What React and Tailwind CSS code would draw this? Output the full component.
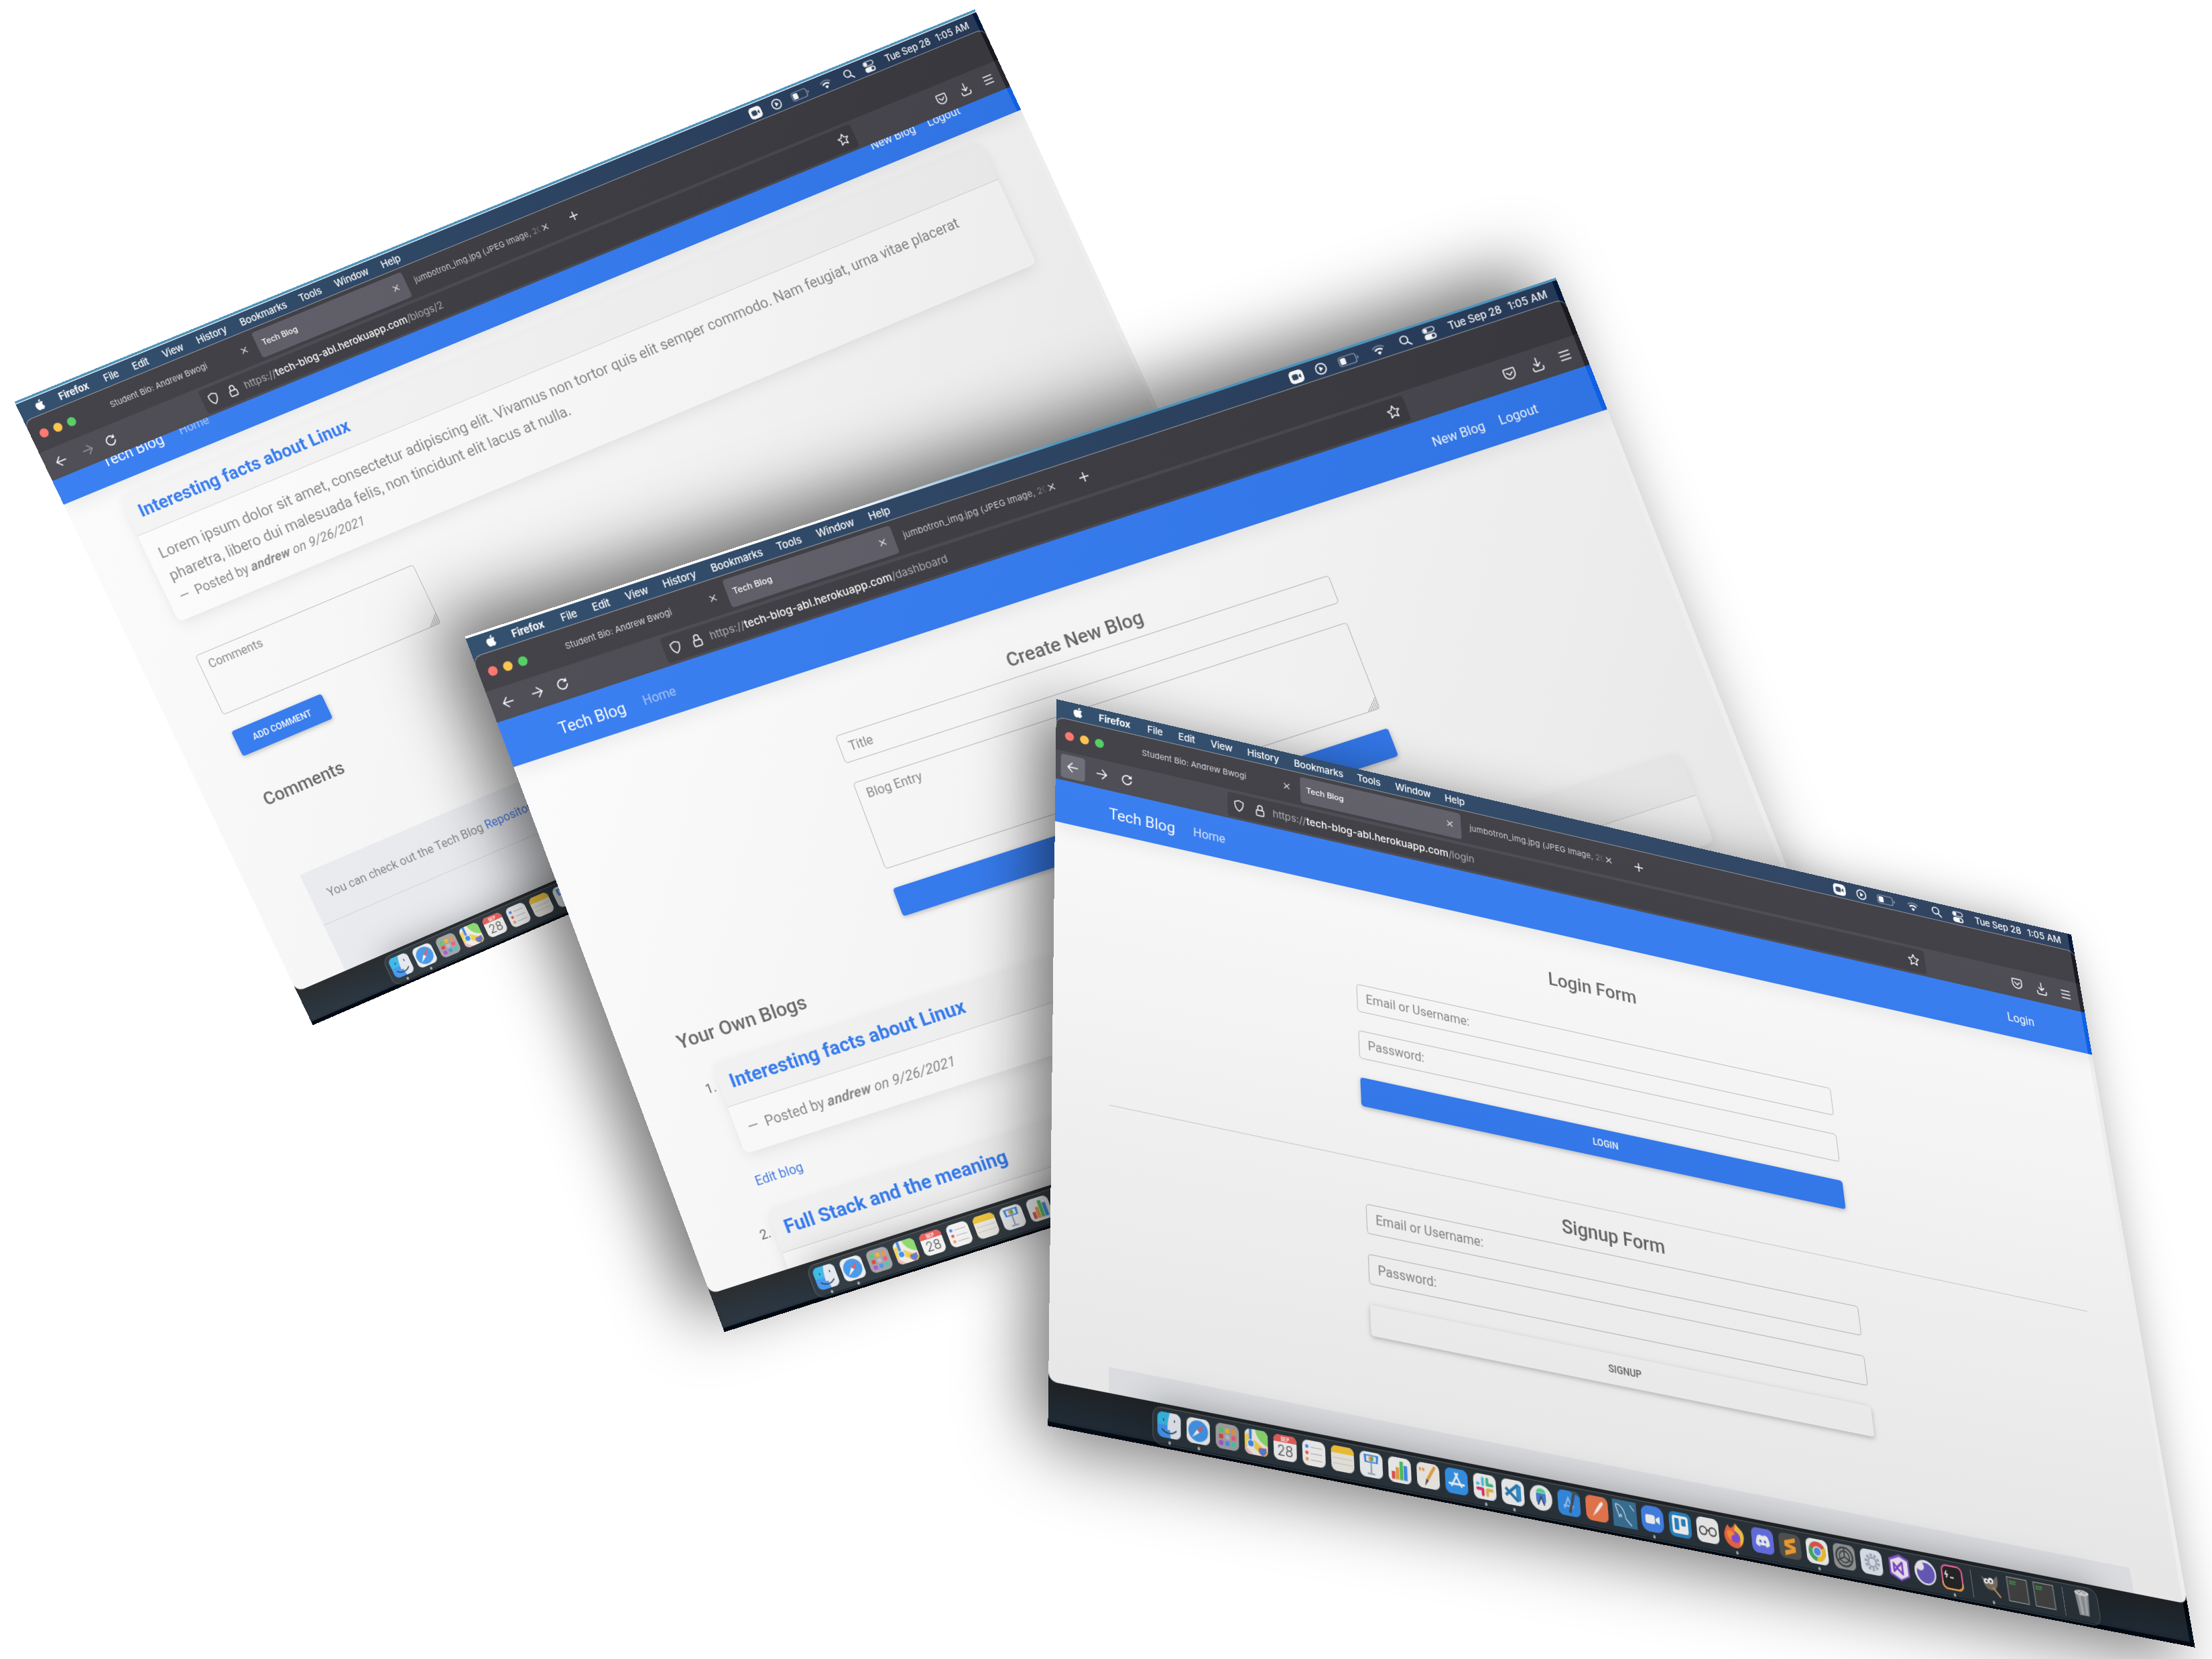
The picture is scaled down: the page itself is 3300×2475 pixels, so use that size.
import React from "react";
import { FaApple, FaDiscord } from "react-icons/fa";

const W = 1440;
const H = 900;

/* Projects the flat 1440x900 desktop onto four corners: TL, TR, BR, BL. */
function project(corners, dx = 0, dy = 0) {
  const [p0, p1, p2, p3] = corners.map(([x, y]) => [x + dx, y + dy]);
  const s = [p0[0] - p1[0] + p2[0] - p3[0], p0[1] - p1[1] + p2[1] - p3[1]];
  const d1 = [p1[0] - p2[0], p1[1] - p2[1]];
  const d2 = [p3[0] - p2[0], p3[1] - p2[1]];
  const det = d1[0] * d2[1] - d1[1] * d2[0];
  const g = (s[0] * d2[1] - s[1] * d2[0]) / det;
  const h = (d1[0] * s[1] - d1[1] * s[0]) / det;
  const a = p1[0] * (1 + g) - p0[0];
  const d = p1[1] * (1 + g) - p0[1];
  const b = p3[0] * (1 + h) - p0[0];
  const e = p3[1] * (1 + h) - p0[1];
  const m = [a / W, d / W, 0, g / W, b / H, e / H, 0, h / H, 0, 0, 1, 0, p0[0], p0[1], 0, 1];
  return { transform: `matrix3d(${m.map((n) => n.toFixed(10)).join(",")})` };
}

const BLOG = [[23.5, 603.5], [1456, 18], [1871, 921], [466.7, 1529.3]];
const DASH = [[694.8, 953], [2322.3, 417.8], [2731, 1459.9], [1080.7, 1987.3]];
const LOGIN = [[1576, 1043], [3089.8, 1394], [3274.6, 2457.7], [1563.5, 2127.3]];

/* ---------- menu bar ---------- */

const MENUS = [
  ["File", "w-[42px]"],
  ["Edit", "w-[44px]"],
  ["View", "w-[50px]"],
  ["History", "w-[64px]"],
  ["Bookmarks", "w-[87px]"],
  ["Tools", "w-[53px]"],
  ["Window", "w-[69px]"],
  ["Help", "w-[40px]"],
];

function MenuBar() {
  return (
    <div className="flex h-[25px] shrink-0 items-center text-[13px] font-medium text-white">
      <div className="flex w-[57px] justify-center pb-px">
        <FaApple size={16} />
      </div>
      <div className="w-[65.5px] font-bold tracking-[-0.2px]">Firefox</div>
      {MENUS.map(([m, w]) => (
        <div key={m} className={w + " tracking-[-0.2px] whitespace-nowrap"}>{m}</div>
      ))}
      <div className="flex-1" />
      <div className="flex items-center">
        <div className="flex w-8 justify-center">
          <svg width="18" height="16" viewBox="0 0 18 16"><rect width="18" height="16" rx="5" fill="#fff" /><rect x="3.5" y="4.5" width="7.5" height="7" rx="1.8" fill="#10294b" /><path d="M12 7.2l2.8-2v5.6L12 8.8z" fill="#10294b" /></svg>
        </div>
        <div className="flex w-8 justify-center">
          <svg width="16" height="16" viewBox="0 0 16 16"><circle cx="8" cy="8" r="6.5" fill="none" stroke="#fff" strokeWidth="1.5" /><path d="M6.2 4.8L11 8l-4.8 3.2z" fill="#fff" /></svg>
        </div>
        <div className="flex w-10 justify-center">
          <svg width="27" height="14" viewBox="0 0 27 14"><rect x=".75" y="1.25" width="22" height="11.5" rx="3" fill="none" stroke="#fff" strokeOpacity=".5" strokeWidth="1.2" /><rect x="2.5" y="3" width="7" height="8" rx="1.5" fill="#fff" /><path d="M24.5 5v4c1-.3 1.6-1 1.6-2s-.6-1.700-1.600-2z" fill="#fff" fillOpacity=".5" /></svg>
        </div>
        <div className="flex w-[38px] justify-center">
          <svg width="17" height="14" viewBox="0 0 17 14" fill="none" strokeLinecap="butt"><path d="M1 5.200a10.800 10.800 0 0 1 15 0" stroke="#fff" strokeOpacity=".35" strokeWidth="1.800" /><path d="M3.600 7.800a7 7 0 0 1 9.800 0" stroke="#fff" strokeWidth="2" /><path d="M8.500 13.500L5.900 10.500a3.600 3.600 0 0 1 5.200 0z" fill="#fff" /></svg>
        </div>
        <div className="flex w-8 justify-center">
          <svg width="15" height="15" viewBox="0 0 15 15" fill="none" stroke="#fff" strokeWidth="1.7" strokeLinecap="round"><circle cx="6.200" cy="6.200" r="4.700" /><path d="M9.800 9.800l4 4" /></svg>
        </div>
        <div className="mr-[9px] flex w-8 justify-center">
          <svg width="16" height="16" viewBox="0 0 16 16"><rect x=".8" y="1" width="14.400" height="6" rx="3" fill="none" stroke="#fff" strokeWidth="1.200" /><circle cx="4" cy="4" r="2.400" fill="#fff" /><rect x=".5" y="8.700" width="15" height="7" rx="3.500" fill="#fff" /><circle cx="11.800" cy="12.200" r="2.100" fill="#10294b" /></svg>
        </div>
        <div className="w-[78px] tracking-[-0.15px] whitespace-nowrap">Tue Sep 28</div>
        <div className="w-[68px] tracking-[0px] whitespace-nowrap">1:05 AM</div>
      </div>
    </div>
  );
}

/* ---------- browser chrome ---------- */

function Cross() {
  return (
    <svg width="9" height="9" viewBox="0 0 9 9" stroke="#e4e4ea" strokeWidth="1.200" className="shrink-0"><path d="M.8.8l7.400 7.400M8.200.8L.8 8.200" /></svg>
  );
}

function TabStrip() {
  return (
    <div className="flex h-[45px] items-center bg-[#1c1b22] text-[11px] text-[#d2d2da]">
      <div className="flex w-[107px] items-center gap-2 pl-[12px]">
        <span className="h-3 w-3 rounded-full bg-[#ff5d55]" />
        <span className="h-3 w-3 rounded-full bg-[#fcba2c]" />
        <span className="h-3 w-3 rounded-full bg-[#33c748]" />
      </div>
      <div className="flex h-9 w-[223px] items-center justify-between pr-[14px] pl-2">
        <span className="whitespace-nowrap">Student Bio: Andrew Bwogi</span>
        <Cross />
      </div>
      <div className="flex h-9 w-[222px] items-center justify-between rounded bg-[#42414d] pr-[11px] pl-2 font-medium text-white">
        <span className="tracking-[-0.05px] whitespace-nowrap">Tech Blog</span>
        <Cross />
      </div>
      <div className="flex h-9 w-[222px] items-center justify-between pr-[10px] pl-3">
        <span className="w-[188px] bg-[linear-gradient(90deg,#d2d2da_90%,#3a3940_100%)] bg-clip-text tracking-[0.12px] whitespace-nowrap text-transparent">jumbotron_img.jpg (JPEG Image, 20</span>
        <Cross />
      </div>
      <div className="flex w-14 justify-center">
        <svg width="14" height="14" viewBox="0 0 14 14" stroke="#fff" strokeWidth="1.400"><path d="M7 1v12M1 7h12" /></svg>
      </div>
    </div>
  );
}

function Arrow({ flip, dim }) {
  return (
    <svg width="15" height="14" viewBox="0 0 15 14" fill="none" stroke="#fbfbfe" strokeOpacity={dim ? 0.4 : 1} strokeWidth="1.500" strokeLinecap="round" strokeLinejoin="round" className={flip ? "rotate-180" : ""}><path d="M14 7H1.500M7 1L1.300 7 7 13" /></svg>
  );
}

function Toolbar({ path, hover, dimForward }) {
  return (
    <div className="flex h-10 items-center bg-[#2b2a33] text-[#fbfbfe]">
      <div className="flex w-[45px] justify-center">
        <div className={hover ? "flex h-8 w-8 items-center justify-center rounded bg-[#52525e]" : "flex h-8 w-8 items-center justify-center"}>
          <Arrow />
        </div>
      </div>
      <div className="flex w-[32px] justify-center"><Arrow flip dim={dimForward} /></div>
      <div className="mr-[118px] flex w-[35px] justify-center">
        <svg width="16" height="16" viewBox="0 0 16 16" fill="none" stroke="#fbfbfe" strokeWidth="1.600" strokeLinecap="round"><path d="M13.800 9.200A6 6 0 1 1 11.500 3.300" /><path d="M14.200 1v5H9.400z" fill="#fbfbfe" stroke="none" /></svg>
      </div>
      <div className="flex h-[33px] w-[979px] items-center rounded bg-[#1c1b22] pl-[8px]">
        <svg width="15" height="17" viewBox="0 0 15 17" fill="none" stroke="#fbfbfe" strokeWidth="1.400" strokeLinejoin="round"><path d="M7.500 1.200l5.700 2.100c.3 5-1.300 9.700-5.700 12.300C3.100 13 1.500 8.300 1.800 3.300z" /></svg>
        <svg width="14" height="17" viewBox="0 0 14 17" fill="none" stroke="#fbfbfe" strokeWidth="1.400" className="ml-[14px]"><rect x="2" y="8" width="10" height="7.500" rx="1.500" /><path d="M4 8V4.500a3 3 0 0 1 6 0V8" /></svg>
        <div className="ml-[10px] flex-1 text-[13.7px] tracking-[-0.05px] whitespace-nowrap text-[#9f9fa8]">
          https://<span className="font-medium text-white">tech-blog-abl.herokuapp.com</span>{path}
        </div>
        <svg width="18" height="18" viewBox="0 0 18 18" fill="none" stroke="#fbfbfe" strokeWidth="1.400" strokeLinejoin="round" className="mr-[8px]"><path d="M9 1.800l2.200 4.800 5 .6-3.700 3.500 1 5.200L9 13.300l-4.500 2.600 1-5.200L1.800 7.200l5-.6z" /></svg>
      </div>
      <div className="flex flex-1 items-center justify-end pr-[17px]">
        <svg width="17" height="17" viewBox="0 0 17 17" fill="none" stroke="#fbfbfe" strokeWidth="1.500" strokeLinecap="round" strokeLinejoin="round"><path d="M3 2h11a1.300 1.300 0 0 1 1.300 1.300V8a6.800 6.800 0 0 1-13.600 0V3.300A1.300 1.300 0 0 1 3 2zM5 6.700l3.500 3.300L12 6.700" /></svg>
        <svg width="17" height="18" viewBox="0 0 17 18" fill="none" stroke="#fbfbfe" strokeWidth="1.500" strokeLinecap="round" strokeLinejoin="round" className="ml-[19px]"><path d="M8.500 1v10M4.700 7.500l3.800 3.800 3.800-3.800M2 12.500v2A2.300 2.300 0 0 0 4.300 16.800h8.400a2.300 2.300 0 0 0 2.300-2.300v-2" /></svg>
        <svg width="15" height="14" viewBox="0 0 15 14" stroke="#fbfbfe" strokeWidth="1.500" strokeLinecap="round" className="ml-[20px]"><path d="M1.500 2h12M1.500 7h12M1.500 12h12" /></svg>
      </div>
    </div>
  );
}

/* ---------- dock ---------- */

const tile = (fill, children) => (
  <>
    <rect x="1" y="1" width="28" height="28" rx="6.500" fill={fill} />
    {children}
  </>
);

const ICONS = [
  { dot: true, art: (<><rect x="1" y="1" width="28" height="28" rx="6.500" fill="#2a8df5" /><path d="M1 7.500A6.500 6.500 0 0 1 7.500 1H16c-2 5-2.500 9-2.700 14H1z" fill="#1fb3ea" /><path d="M16 1h6.500A6.500 6.500 0 0 1 29 7.500v15a6.500 6.500 0 0 1-6.500 6.500H17c-.6-3-1-6-1-9h-3c0-7 1-13 3-19z" fill="#e9edf4" /><path d="M8.500 8.500v2M21.500 8.500v2M6.500 20c5 5 12 5 17 0" stroke="#123" strokeWidth="1.200" fill="none" strokeLinecap="round" /></>) },
  { dot: true, art: tile("#f4f4f4", <><circle cx="15" cy="15" r="11.800" fill="#2c8df0" /><path d="M22.500 7.500l-6 9-3-3z" fill="#f3443d" /><path d="M7.500 22.500l6-9 3 3z" fill="#fff" /></>) },
  { art: tile("#9b9ba0", <><rect x="5" y="6" width="5" height="5" rx="1" fill="#34d058" /><rect x="12.500" y="6" width="5" height="5" rx="1" fill="#f7b500" /><rect x="20" y="6" width="5" height="5" rx="1" fill="#f58a1f" /><rect x="5" y="13" width="5" height="5" rx="1" fill="#e02f2f" /><rect x="12.500" y="13" width="5" height="5" rx="1" fill="#b9b9be" /><rect x="20" y="13" width="5" height="5" rx="1" fill="#fb4666" /><rect x="5" y="20" width="5" height="5" rx="1" fill="#a340d8" /><rect x="12.500" y="20" width="5" height="5" rx="1" fill="#2d8cf0" /><rect x="20" y="20" width="5" height="5" rx="1" fill="#2ec9a4" /></>) },
  { art: tile("#f6f2e9", <><path d="M14 1h8.500A6.500 6.500 0 0 1 29 7.500V18C22 16 15 10 14 1z" fill="#7fdc5c" /><path d="M12 12l17 12c-.6 3-3 5-6.500 5L11 20z" fill="#f8d03a" /><path d="M1 8l5-2v14l-5 2z" fill="#f8d648" /><path d="M1 20l10 9H7.500C4 29 1 26 1 22.500z" fill="#f6b8bd" /><path d="M8 1v16" stroke="#1674e6" strokeWidth="3" /><circle cx="8.500" cy="17" r="4" fill="#2583f2" stroke="#fff" strokeWidth="1.200" /><path d="M18 21l9-1v4c0 2-3 4-4.500 4.500C21 28 18 26 18 24z" fill="#3d74d6" stroke="#e04848" strokeWidth=".8" /></>) },
  { art: tile("#fafafa", <><path d="M1 9V7.500A6.500 6.500 0 0 1 7.500 1h15A6.500 6.500 0 0 1 29 7.500V9z" fill="#ee4a46" /><text x="15" y="7.800" fontSize="5.500" fontWeight="700" textAnchor="middle" fill="#fff">SEP</text><text x="15" y="24" fontSize="16" fontWeight="300" textAnchor="middle" fill="#333">28</text></>) },
  { art: tile("#fafafa", <><circle cx="6.500" cy="8" r="2" fill="#2f7df6" /><circle cx="6.500" cy="15" r="2" fill="#f0443c" /><circle cx="6.500" cy="22" r="2" fill="#f29a38" /><path d="M11 8.500h14M11 15.500h14M11 22.500h14" stroke="#bdbdbd" strokeWidth="1" /></>) },
  { art: tile("#f3f0e8", <><path d="M1 9V7.500A6.500 6.500 0 0 1 7.500 1h15A6.500 6.500 0 0 1 29 7.500V9z" fill="#fbc41d" /><path d="M3 14.500h24M3 20.500h24" stroke="#d0ccc2" strokeWidth=".9" /></>) },
  { art: tile("#f6f9fc", <><path d="M6 4h18l-1 9H7z" fill="#2a7fe6" /><path d="M9 5.500h12v6H9z" fill="#e8f2ff" /><circle cx="15" cy="8.300" r="2.800" fill="#f08c2e" /><path d="M15 5.500a2.800 2.800 0 0 1 0 5.600z" fill="#3bb54a" /><path d="M15 13v11M10.500 25h9" stroke="#7d94ad" strokeWidth="1.600" /></>) },
  { art: tile("#fafafa", <><rect x="5" y="17" width="4.300" height="8.500" fill="#e7443f" /><rect x="10" y="12" width="4.300" height="13.500" fill="#f39a2c" /><rect x="15" y="5" width="4.300" height="20.500" fill="#3ac152" /><rect x="20" y="9" width="4.300" height="16.500" fill="#2c83f2" /></>) },
  { art: tile("#f8f5f0", <><path d="M22 3l3 1.500L15.500 20l-3-1.500z" fill="#f39a2c" /><path d="M12.500 18.500l3 1.500-5 7z" fill="#3c3c3c" /><path d="M4 7h2.500v3.500H4zM8 7h2.500v3.500H8z" fill="#f2962b" /></>) },
  { art: tile("#1d8bf0", <><path d="M16.500 6.500L9 20M13.500 6.500L21 20M6 18h18" stroke="#fff" strokeWidth="2.300" strokeLinecap="round" /></>) },
  { dot: true, art: tile("#fafafa", <g fill="none" strokeWidth="3.400" strokeLinecap="round"><path d="M12.500 6v7" stroke="#36c5f0" /><path d="M6 12.300h1" stroke="#36c5f0" /><path d="M18 6v6" stroke="#2eb67d" /><path d="M18 12.300h6" stroke="#2eb67d" /><path d="M6 17.700h5" stroke="#e01e5a" /><path d="M12.500 18v6" stroke="#e01e5a" /><path d="M18 18h6M18 18v6" stroke="#ecb22e" /></g>) },
  { dot: true, art: tile("#fafafa", <><path d="M21 5l4 2v16l-4 2-2-1.500V6.500z" fill="#1c8ad4" /><path d="M6 11l15 13M6 19L21 6" stroke="#0f6cb0" strokeWidth="3.400" fill="none" /></>) },
  { art: (<><circle cx="15" cy="15" r="14" fill="#f6f6f6" /><path d="M9 9.500a6 5 0 0 1 12 0z" fill="#3ddc84" /><path d="M9 10h12v9l-2 3-4-8-4 8-2-3z" fill="#3573dd" /><path d="M11 23l4-9 4 9" stroke="#16325c" strokeWidth="1.600" fill="none" /></>) },
  { art: tile("#1d82e8", <><path d="M9 21l5-12 5 12M8 18h13" stroke="#9fd0ff" strokeWidth="1.600" fill="none" /><path d="M16 1l9 .5 4 5-5.500-3L17 26l-3-1 6-22z" fill="#333a44" /></>) },
  { art: tile("#f26b3a", <><path d="M19 8l3-2 1 3-7 9-7 6 5-9z" fill="#fff" /></>) },
  { art: (<><path d="M0 0h30v30H0z" fill="#21638f" /><path d="M4 5c8 0 11 8 12 15l7 7M4 5c0 6 3 8 4 14l2-3 1 3M22 4l5 6" stroke="#dfeefa" strokeWidth="1.100" fill="none" /></>) },
  { dot: true, art: (<><rect x="1" y="0" width="28" height="29" rx="9" fill="#2f78ee" /><rect x="6" y="10" width="12" height="10" rx="2.500" fill="#fff" /><path d="M19 13.500l5-3v9l-5-3z" fill="#fff" /></>) },
  { art: tile("#0f79c4", <><rect x="5" y="5" width="20" height="20" rx="3" fill="#fff" /><rect x="8" y="8" width="5.500" height="13" rx="1" fill="#0f79c4" /><rect x="16.500" y="8" width="5.500" height="8" rx="1" fill="#0f79c4" /></>) },
  { art: tile("#f7f7f7", <g fill="none" stroke="#222" strokeWidth="1.500"><circle cx="9" cy="16" r="4.500" /><circle cx="21" cy="16" r="4.500" /><path d="M13.500 15.500q1.500-1 3 0" /></g>) },
  { dot: true, art: (<><path d="M3 9c1-3 3-5 4-5 0 2 1 3 3 3 3-1 4-4 6-6 0 4 5 5 7 9 5 9 0 19-8 19S1 23 1 16c0-3 1-5 2-7z" fill="#f9552c" /><path d="M17 1c0 4 6 5 8 10s0 12-5 15c3-8 0-15-6-17 1-3 2-6 3-8z" fill="#ffc72d" /><circle cx="15" cy="17" r="6" fill="#7a3be0" /><path d="M5 11c4-2 8 0 10 3-4 0-6 3-5 7-5-2-6-6-5-10z" fill="#ff8a1f" /></>) },
  { art: tile("#5663ea", <g transform="translate(5.500 5.500)"><FaDiscord size={19} color="#fff" /></g>) },
  { art: tile("#403f3d", <path d="M22 5L8 9.500v6l9 2.500-9 2.500V26l14-5v-6l-9-2.500L22 10z" fill="#ff9a14" />) },
  { dot: true, art: tile("#fafafa", <><circle cx="15" cy="15" r="11" fill="#34a853" /><path d="M15 15L5.500 9.500A11 11 0 0 1 24.600 9.700z" fill="#e94235" /><path d="M15 15l9.600-5.400A11 11 0 0 1 14 26z" fill="#fbc116" /><circle cx="15" cy="15" r="5.200" fill="#4285f4" stroke="#fff" strokeWidth="1.300" /></>) },
  { art: tile("#8b8e90", <g fill="none" stroke="#2c2f31"><circle cx="15" cy="15" r="10.500" strokeWidth="2" /><circle cx="15" cy="15" r="6.500" strokeWidth="1.500" /><path d="M15 15V5M15 15l9 5M15 15l-9 5" strokeWidth="1.600" /></g>) },
  { art: tile("#e6edf7", <g fill="none" stroke="#97a4b8"><circle cx="16" cy="15" r="8" strokeWidth="3.500" strokeDasharray="3 2" /><circle cx="16" cy="15" r="5" strokeWidth="2" /></g>) },
  { art: (<><path d="M3 6l14-6 12 5v19l-12 6L3 24z" fill="#7b3fd0" /><path d="M5 8l12-5 10 4v16l-10 5L5 22z" fill="#f6effe" /><path d="M9 11v9l4-4 7 6V9l-7 6.500zM9 11l4 4.500M9 20l4-4" stroke="#7637c7" strokeWidth="2.400" strokeLinejoin="round" fill="none" /></>) },
  { art: (<><circle cx="15" cy="15" r="14" fill="#f4f2fb" /><circle cx="15.500" cy="15.500" r="11.500" fill="#5a49bb" /><circle cx="9" cy="8.500" r="5" fill="#f4f2fb" /></>) },
  { dot: true, art: (<><rect x="2" y="2" width="26" height="26" rx="6" fill="#0a0a0c" stroke="#f3508c" strokeWidth="2" /><path d="M2 20v2a6 6 0 0 0 6 6h14a6 6 0 0 0 6-6v-2" stroke="#f9a13c" strokeWidth="2" fill="none" /><path d="M8 8l-2 4h3l-2 4M12 15h5" stroke="#fff" strokeWidth="1.500" fill="none" /></>) },
  { sep: true },
  { dot: true, art: (<><path d="M3 6l7 4 8-1 6-6c1 8 0 14-6 17-7 2-12-2-13-9z" fill="#6d6152" /><circle cx="9" cy="11" r="3" fill="#fff" /><circle cx="15" cy="10" r="3.500" fill="#fff" /><circle cx="9.500" cy="11" r="1.200" fill="#111" /><circle cx="15" cy="10.500" r="1.300" fill="#111" /><path d="M17 17l9 10" stroke="#c98a4b" strokeWidth="2" /></>) },
  { art: (<><rect x="2" y="1.500" width="26" height="27" fill="#2b2c2b" stroke="#8f9496" strokeWidth="1" /><path d="M5 6h9M5 8.500h8" stroke="#2fae4a" strokeWidth="1.500" strokeDasharray="2 .8" /></>) },
  { art: (<><rect x="2" y="1.500" width="26" height="27" fill="#2b2c2b" stroke="#8f9496" strokeWidth="1" /><path d="M5 6h9M5 8.500h8" stroke="#2fae4a" strokeWidth="1.500" strokeDasharray="2 .8" /></>) },
  { sep: true },
  { art: (<><path d="M6 4h18l-2.500 25h-13z" fill="#85898c" /><path d="M10 5l1.500 23h3L13 5zM18 5l-.5 23h2L21 5z" fill="#a9adb0" /><ellipse cx="15" cy="3.500" rx="9.500" ry="3.200" fill="#d4d7d9" /><path d="M9 2l3 2 3-3 3 3 3-2" stroke="#777" strokeWidth="1" fill="none" /></>) },
];

function Dock() {
  return (
    <div className="flex h-[49px] shrink-0 justify-center pt-1">
      <div className="relative flex h-[42px] w-[1193px] items-center rounded-[11px] border border-[#39434c] bg-[#101a23] pl-[2px] shadow-[0_0_45px_rgba(0,0,0,0.42)]">
        {ICONS.map((icon, i) =>
          icon.sep ? (
            <div key={i} className="flex w-4 shrink-0 justify-center">
              <span className="h-8 w-px bg-[#55606a]" />
            </div>
          ) : (
            <div key={i} className="flex h-full w-[35px] shrink-0 flex-col items-center pt-[3px]">
              <svg width="30" height="30" viewBox="0 0 30 30">{icon.art}</svg>
              {icon.dot && <span className="mt-[2px] h-[3.500px] w-[3px] rounded-full bg-[#a4abb2]" />}
            </div>
          )
        )}
      </div>
    </div>
  );
}

/* ---------- the blog site ---------- */

function Nav({ links, home = "text-white/55", lift = "pt-1" }) {
  return (
    <div className="relative flex h-[58px] shrink-0 items-center bg-[#1266f1] px-[72px] text-base text-white shadow-[0_6px_24px_rgba(0,0,0,0.09)]">
      <div className={"flex flex-1 items-center " + lift}>
        <span className="-ml-px text-[20px]">Tech Blog</span>
        <span className={"ml-6 " + home}>Home</span>
        <div className="flex flex-1 justify-end gap-[19px] pr-2">
          {links.map((l) => (
            <span key={l}>{l}</span>
          ))}
        </div>
      </div>
    </div>
  );
}

function Heading({ children, className }) {
  return <h4 className={"text-[24px] leading-[29px] font-medium text-[#4f4f4f] " + className}>{children}</h4>;
}

function Field({ label, className }) {
  return <div className={"rounded border border-[#bdbdbd] px-[11px] text-base text-[#757575] " + className}>{label}</div>;
}

function Area({ label, className }) {
  return (
    <div className={"relative rounded border border-[#bdbdbd] px-[11px] pt-[5px] text-base text-[#757575] " + className}>
      {label}
      <svg width="14" height="14" viewBox="0 0 14 14" stroke="#888" strokeWidth=".9" className="absolute right-0 bottom-0"><path d="M0 14L14 0M3 14L14 3M6 14l8-8M9 14l5-5M12 14l2-2" /></svg>
    </div>
  );
}

function Button({ children, className }) {
  return (
    <div className={"flex h-9 items-center justify-center rounded text-[12px] font-medium shadow-[0_2px_5px_rgba(0,0,0,0.2),0_2px_10px_rgba(0,0,0,0.1)] " + className}>{children}</div>
  );
}

const CARD = "rounded-lg bg-[#fefefe] shadow-[0_10px_20px_rgba(0,0,0,0.05),0_2px_15px_-3px_rgba(0,0,0,0.07)]";

function CardHead({ children }) {
  return (
    <div className="flex h-[56px] items-center rounded-t-lg border-b border-[#d8d8d8] bg-[#f5f5f5] px-4 pb-px text-[24px] font-bold text-[#1266f1]">{children}</div>
  );
}

function Posted() {
  return (
    <div className="text-[17.5px] leading-[28px] tracking-[0.1px] text-[#757575]">
      —&nbsp; Posted by <span className="inline-block -skew-x-6 tracking-[0.2px] italic"><b>andrew</b> on 9/26/2021</span>
    </div>
  );
}

function BlogPage() {
  return (
    <div className="-mt-6 flex flex-col">
      <Nav links={["New Blog", "Logout"]} lift="pb-1 pl-px" />
      <div className="flex flex-col px-[72px]">
        <div className={"mt-[19px] h-[180px] " + CARD}>
          <CardHead>Interesting facts about Linux</CardHead>
          <div className="p-4">
            <div className="text-[20px] leading-8 text-[#757575]">
              Lorem ipsum dolor sit amet, consectetur adipiscing elit. Vivamus non tortor quis elit semper commodo. Nam feugiat, urna vitae placerat
              <br />
              pharetra, libero dui malesuada felis, non tincidunt elit lacus at nulla.
            </div>
            <Posted />
          </div>
        </div>
        <Area label="Comments" className="mt-[49px] h-[86px] w-[323px]" />
        <Button className="mt-6 w-[133px] bg-[#1266f1] text-white">ADD COMMENT</Button>
        <Heading className="mt-[50px]">Comments</Heading>
        <div className="mt-[94px] h-[160px] bg-[#eceef3]">
          <div className="flex h-[74px] items-center border-b border-[#d5d6d9] pl-6 text-base text-[#757575]">
            <span>You can check out the Tech Blog <span className="text-[#2c67e2]">Repository</span></span>
          </div>
        </div>
      </div>
    </div>
  );
}

function DashboardPage() {
  return (
    <div className="flex flex-col">
      <Nav links={["New Blog", "Logout"]} />
      <div className="flex flex-col px-[72px]">
        <div className="mt-[50px] -ml-[2px] flex w-[650px] flex-col self-center pr-px">
          <Heading className="text-center">Create New Blog</Heading>
          <Field label="Title" className="mt-[7px] h-9 leading-[34px]" />
          <Area label="Blog Entry" className="mt-[25px] h-[112px]" />
          <Button className="mt-[25px] bg-[#1266f1] text-white">CREATE</Button>
        </div>
        <Heading className="mt-[48px]">Your Own Blogs</Heading>
        <div className="mt-[22px] flex">
          <span className="w-[31px] shrink-0 pt-4 pr-[5px] text-right text-base text-[#4f4f4f]">1.</span>
          <div className="flex flex-1 flex-col">
            <div className={CARD}>
              <CardHead><span className="-ml-[2px]">Interesting facts about Linux</span></CardHead>
              <div className="p-4 pl-[15px]"><Posted /></div>
            </div>
            <span className="mt-6 text-base text-[#1f66e0]">Edit blog</span>
          </div>
        </div>
        <div className="mt-[24px] flex">
          <span className="w-[31px] shrink-0 pt-4 pr-[5px] text-right text-base text-[#4f4f4f]">2.</span>
          <div className="flex flex-1 flex-col">
            <div className={CARD}>
              <CardHead><span className="-ml-[2px]">Full Stack and the meaning</span></CardHead>
              <div className="h-[60px]" />
            </div>
          </div>
        </div>
      </div>
    </div>
  );
}

function LoginPage() {
  return (
    <div className="flex flex-col">
      <Nav links={["Login"]} home="text-white/80" />
      <div className="flex flex-col px-[72px]">
        <div className="mt-[49px] flex w-[648px] flex-col self-center">
          <Heading className="text-center">Login Form</Heading>
          <Field label="Email or Username:" className="mt-[49px] h-9 leading-[34px]" />
          <Field label="Password:" className="mt-6 h-9 leading-[34px]" />
          <Button className="mt-6 bg-[#1266f1] text-white">LOGIN</Button>
        </div>
        <div className="mt-[65px] h-px bg-[#cfcfcf]" />
        <div className="mt-[17px] flex w-[648px] flex-col self-center">
          <Heading className="text-center">Signup Form</Heading>
          <Field label="Email or Username:" className="mt-[8px] h-9 leading-[34px]" />
          <Field label="Password:" className="mt-6 h-9 leading-[34px]" />
          <Button className="mt-6 bg-[#fbfbfb] text-[#4f4f4f]">SIGNUP</Button>
        </div>
        <div className="mt-[95px] h-[60px] bg-[#eceef3]" />
      </div>
    </div>
  );
}

/* ---------- desktops ---------- */

const DIAGONAL = "bg-[linear-gradient(125deg,rgba(252,252,252,0.18),rgba(195,195,195,0.19)_55%,rgba(145,145,145,0.2))]";
const VERTICAL = "bg-[linear-gradient(178deg,rgba(252,252,252,0.18),rgba(200,200,200,0.19)_45%,rgba(135,135,135,0.2))]";

function Desktop({ corners, sheen, rim, path, hover, dimForward, children }) {
  return (
    <div className="absolute top-0 left-0 h-[900px] w-[1440px] origin-top-left" style={project(corners)}>
      {rim}
      <div className="relative flex h-[900px] w-[1440px] flex-col overflow-hidden bg-[linear-gradient(90deg,#082b50,#051c40)] font-[Inter,sans-serif]">
        <div className="absolute inset-x-0 bottom-0 h-[62px] bg-[linear-gradient(180deg,#020304,#04121f_85%,#010710)]" />
        <MenuBar />
        <div className="relative flex h-[826px] shrink-0 flex-col overflow-hidden rounded-[10px] bg-[#fcfcfc] shadow-[0_-1px_0_#7a7a80]">
          <TabStrip />
          <Toolbar path={path} hover={hover} dimForward={dimForward} />
          <div className="flex-1 overflow-hidden font-[Roboto,sans-serif]">{children}</div>
        </div>
        <Dock />
        <div className="pointer-events-none absolute inset-y-0 right-0 w-[6px] bg-black/[0.055]" />
        <div className={"pointer-events-none absolute top-0 right-[6px] bottom-[5px] left-0 " + sheen} />
      </div>
    </div>
  );
}

function Shadow({ corners, dx, dy, tone }) {
  return (
    <div className="absolute top-0 left-0 h-[900px] w-[1440px] origin-top-left" style={project(corners, dx, dy)}>
      <div className={"h-full w-full blur-[42px] " + tone} />
    </div>
  );
}

export default function App() {
  return (
    <div className="relative h-[2475px] w-[3300px] overflow-hidden bg-white">
      <Desktop
        corners={BLOG}
        sheen={DIAGONAL}
        rim={<div className="absolute inset-x-0 -top-[4px] h-[3px] bg-[#4f94bb]" />}
        path="/blogs/2"
        dimForward
      >
        <BlogPage />
      </Desktop>
      <Shadow corners={DASH} dx={-46} dy={-22} tone="bg-black/55" />
      <Desktop
        corners={DASH}
        sheen={DIAGONAL}
        rim={<div className="absolute inset-x-0 -top-[3px] h-[3px] bg-[linear-gradient(90deg,#fff_0%,#fff_35%,#4f94bb_55%)]" />}
        path="/dashboard"
      >
        <DashboardPage />
      </Desktop>
      <Shadow corners={LOGIN} dx={-25} dy={15} tone="bg-black/55" />
      <Desktop corners={LOGIN} sheen={VERTICAL} path="/login" hover>
        <LoginPage />
      </Desktop>
    </div>
  );
}
